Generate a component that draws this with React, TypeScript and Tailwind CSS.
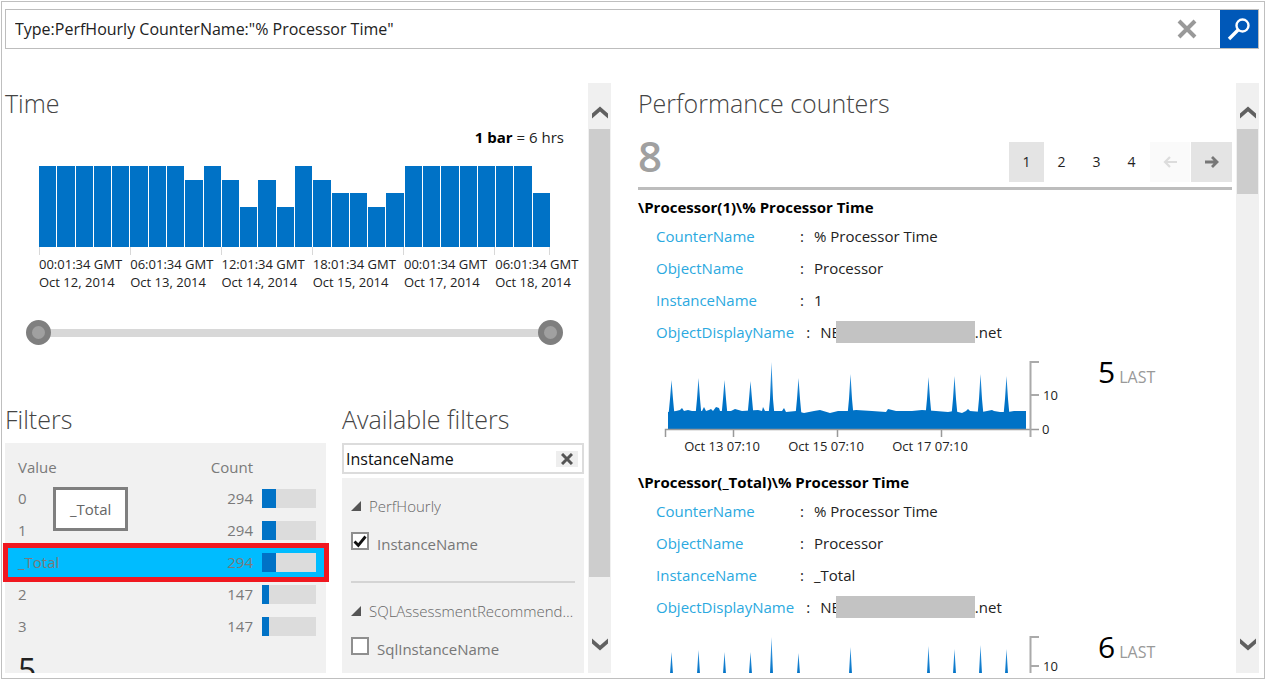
import React, { useState } from "react";

const BAR_UNITS = [
  6, 6, 6, 6, 6, 6, 6, 6, 5, 6, 5, 3, 5, 3, 6, 5, 4, 4, 3, 4, 6, 6, 6, 6, 6, 6, 6, 4,
];

const TIME_LABELS = [
  ["00:01:34 GMT", "Oct 12, 2014"],
  ["06:01:34 GMT", "Oct 13, 2014"],
  ["12:01:34 GMT", "Oct 14, 2014"],
  ["18:01:34 GMT", "Oct 15, 2014"],
  ["00:01:34 GMT", "Oct 17, 2014"],
  ["06:01:34 GMT", "Oct 18, 2014"],
];

const FILTER_ROWS = [
  { value: "0", count: 294 },
  { value: "1", count: 294 },
  { value: "_Total", count: 294 },
  { value: "2", count: 147 },
  { value: "3", count: 147 },
];

const SPIKE_X = [15, 42, 68, 94, 115, 142, 194, 272, 298, 324, 350];

const COUNTERS = [
  {
    title: "\\Processor(1)\\% Processor Time",
    instance: "1",
    last: "5",
    tick: 46,
    tops: [31, 29, 31, 32, 13, 29, 25, 28, 27, 25, 27],
  },
  {
    title: "\\Processor(_Total)\\% Processor Time",
    instance: "_Total",
    last: "6",
    tick: 42,
    tops: [28, 26, 28, 28, 13, 29, 23, 22, 25, 21, 25],
  },
];

function Chevron({ down = false }: { down?: boolean }) {
  return (
    <svg width="16" height="13" viewBox="0 0 16 13" aria-hidden="true">
      <path
        d={down ? "M0 0.5L8 7.5L16 0.5V5.5L8 12.5L0 5.5Z" : "M0 12.5L8 5.5L16 12.5V7.5L8 0.5L0 7.5Z"}
        fill="#606060"
      />
    </svg>
  );
}

function Scrollbar({ size }: { size: string }) {
  return (
    <div className="flex w-[23px] shrink-0 flex-col bg-[#f0f0f0] px-px">
      <button type="button" aria-label="Scroll up" className="flex h-[46px] shrink-0 items-center justify-center pt-3">
        <Chevron />
      </button>
      <div className="min-h-0 flex-1">
        <div className={"bg-[#cdcdcd] " + size} />
      </div>
      <button type="button" aria-label="Scroll down" className="flex h-[46px] shrink-0 items-center justify-center pb-3">
        <Chevron down />
      </button>
    </div>
  );
}

function SearchBar() {
  const [query, setQuery] = useState('Type:PerfHourly CounterName:"% Processor Time"');
  return (
    <form
      className="ml-[3px] flex h-10 shrink-0 border border-[#bdbdbd] bg-white"
      onSubmit={(e) => e.preventDefault()}
    >
      <input
        aria-label="Search query"
        value={query}
        onChange={(e) => setQuery(e.target.value)}
        className="min-w-0 flex-1 pl-[9px] text-base text-[#222] outline-none"
      />
      <button type="button" aria-label="Clear search" onClick={() => setQuery("")} className="flex w-[66px] items-center justify-center">
        <svg width="20" height="20" viewBox="0 0 20 20" aria-hidden="true">
          <path d="M2 2L18 18M18 2L2 18" stroke="#999" strokeWidth="4" />
        </svg>
      </button>
      <button type="submit" aria-label="Search" className="flex w-[38px] items-center justify-center bg-[#0058b8]">
        <svg width="24" height="24" viewBox="0 0 24 24" fill="none" stroke="#fff" aria-hidden="true">
          <circle cx="15.5" cy="8.5" r="6" strokeWidth="2.4" />
          <path d="M11 13L2 22" strokeWidth="3.4" />
        </svg>
      </button>
    </form>
  );
}

const THUMB =
  "pointer-events-none absolute inset-0 h-[25px] w-full appearance-none bg-transparent [&::-webkit-slider-thumb]:pointer-events-auto [&::-webkit-slider-thumb]:size-[25px] [&::-webkit-slider-thumb]:appearance-none [&::-webkit-slider-thumb]:rounded-full [&::-webkit-slider-thumb]:border-[6px] [&::-webkit-slider-thumb]:border-[#7f7f7f] [&::-webkit-slider-thumb]:bg-[#a0a0a0]";

function TimeSection() {
  return (
    <section>
      <h2 className="text-[25px] leading-10 font-light text-[#444]">Time</h2>
      <p className="mt-0.5 mr-6 text-right text-[15px] leading-6 text-[#222]">
        <b className="font-bold text-black">1 bar</b> = 6 hrs
      </p>
      <div className="mt-[17px] mr-[38px] ml-[34px]">
        <div className="grid h-[81px] grid-cols-28 items-end gap-px">
          {BAR_UNITS.map((u, i) => (
            <div key={i} className="bg-[#0072c6]" style={{ height: `${(u / 6) * 100}%` }} />
          ))}
        </div>
        <div className="grid grid-cols-28 border-r border-[#d8d8d8]">
          {TIME_LABELS.map((_, i) => (
            <div key={i} className="col-span-5 h-2 border-l border-[#d8d8d8] last:col-span-3" />
          ))}
        </div>
        <div className="grid grid-cols-28">
          {TIME_LABELS.map(([time, date]) => (
            <div key={date} className="col-span-5 text-[13px] leading-[18px] whitespace-nowrap text-[#222] last:col-span-3">
              {time}
              <br />
              {date}
            </div>
          ))}
        </div>
      </div>
      <div className="relative mt-[29px] mr-[25px] ml-[21px] flex h-[25px] items-center">
        <div className="mx-3 h-2 flex-1 bg-[#d8d8d8]" />
        <input type="range" aria-label="Range start" min={0} max={28} defaultValue={0} className={THUMB} />
        <input type="range" aria-label="Range end" min={0} max={28} defaultValue={28} className={THUMB} />
      </div>
    </section>
  );
}

function Filters() {
  return (
    <section className="flex min-h-0 flex-col">
      <h2 className="text-[25px] leading-10 font-light text-[#444]">Filters</h2>
      <div className="relative mt-1 flex-1 bg-[#f1f1f1] pt-[9px]">
        <table className="w-full table-fixed text-[15px] text-[#7a7a7a]">
          <thead>
            <tr className="h-[30px]">
              <th className="pl-[13px] text-left font-normal">Value</th>
              <th className="w-20 text-right font-normal">Count</th>
              <th className="w-[73px]" aria-label="Share" />
            </tr>
          </thead>
          <tbody>
            {FILTER_ROWS.map((row) => (
              <tr key={row.value} className={row.value === "_Total" ? "h-8 bg-[#00bcff]" : "h-8"}>
                <td className="pl-[13px]">{row.value}</td>
                <td className="text-right">{row.count}</td>
                <td className="pr-2.5 pl-[9px]">
                  <div className="h-[19px] bg-[#dcdcdc]">
                    <div className="h-full bg-[#0072c6]" style={{ width: `${(row.count / 1176) * 100}%` }} />
                  </div>
                </td>
              </tr>
            ))}
          </tbody>
        </table>
        <p className="mt-2 pl-[13px] text-[32px] leading-10 text-[#222]">5</p>
        <div className="absolute top-[100px] -right-[3px] -left-0.5 h-[39px] border-[5px] border-[#f01820]" />
        <div className="absolute top-11 left-12 border-[3px] border-[#7f7f7f] bg-white px-3.5 py-2 text-[15px] leading-[22px] text-[#666]">
          _Total
        </div>
      </div>
    </section>
  );
}

function FilterGroup({ name, field, checked }: { name: string; field: string; checked?: boolean }) {
  return (
    <div>
      <button type="button" className="flex h-6 w-full items-center gap-2 text-left text-[15px] font-light text-[#666]">
        <svg width="10" height="10" viewBox="0 0 10 10" className="shrink-0" aria-hidden="true">
          <path d="M10 0V10H0Z" fill="#555" />
        </svg>
        <span className="truncate">{name}</span>
      </button>
      <label className="mt-3 flex h-7 items-start gap-2 text-[15px] leading-7 text-[#777]">
        <span className="relative mt-0.5 flex size-[18px] shrink-0">
          <input
            type="checkbox"
            defaultChecked={checked}
            className="peer size-[18px] appearance-none border-2 border-[#8f8f8f] bg-white"
          />
          <svg
            width="18"
            height="18"
            viewBox="0 0 18 18"
            className="pointer-events-none absolute inset-0 hidden peer-checked:block"
            aria-hidden="true"
          >
            <path d="M3.5 9.5L7.3 13.3L14.5 4.5" fill="none" stroke="#111" strokeWidth="2.8" />
          </svg>
        </span>
        {field}
      </label>
    </div>
  );
}

function AvailableFilters() {
  const [text, setText] = useState("InstanceName");
  return (
    <section className="flex min-h-0 min-w-0 flex-col">
      <h2 className="text-[25px] leading-10 font-light whitespace-nowrap text-[#444]">Available filters</h2>
      <div className="mt-1 flex h-[31px] shrink-0 items-center border-2 border-[#dcdcdc] bg-white pr-1">
        <input
          aria-label="Search available filters"
          value={text}
          onChange={(e) => setText(e.target.value)}
          className="min-w-0 flex-1 pl-0.5 text-base text-[#111] outline-none"
        />
        <button
          type="button"
          aria-label="Clear filter"
          onClick={() => setText("")}
          className="flex h-4 w-[22px] items-center justify-center bg-[#eee]"
        >
          <svg width="12" height="12" viewBox="0 0 12 12" aria-hidden="true">
            <path d="M1 1L11 11M11 1L1 11" stroke="#555" strokeWidth="3" />
          </svg>
        </button>
      </div>
      <div className="mt-1 flex-1 bg-[#f1f1f1] px-[9px] pt-4">
        <FilterGroup name="PerfHourly" field="InstanceName" checked />
        <hr className="mt-[23px] mb-4 border-t-2 border-[#d4d4d4]" />
        <FilterGroup name="SQLAssessmentRecommendation" field="SqlInstanceName" />
      </div>
    </section>
  );
}

const AREA_TOP =
  "M12 80V63L20 62L24 61L26 59L28 62L32 61L36 62H46L48 58L50 62L53 61L55 60L57 62L60 58L63 59L64 62H75L79 60L86 62L102 61L106 62L107 58L109 62H126L128 59L130 63L140 62L148 64L158 62L164 61L174 64L182 62L192 62L200 61L216 62L230 63L232 60L240 62H256L266 61L280 62L292 63L298 62L306 64L310 62L312 60L314 62L326 63L336 61L338 62L344 63L352 63L358 62H370V80Z";

function CounterChart({ tops, tick, id }: { tops: number[]; tick: number; id: string }) {
  return (
    <svg width="410" height="117" viewBox="0 -1 410 117" className="shrink-0" role="img" aria-label="Processor time history">
      <defs>
        <linearGradient id={id} x1="0" y1="10" x2="0" y2="60" gradientUnits="userSpaceOnUse">
          <stop offset="0" stopColor="#4da3e8" />
          <stop offset="0.8" stopColor="#0072c6" />
        </linearGradient>
      </defs>
      {SPIKE_X.map((x, i) => (
        <path key={x} d={`M${x + 0.5} ${tops[i]}L${x + 2} 50L${x + 3.3} 64H${x - 2.3}L${x - 1} 50Z`} fill={`url(#${id})`} />
      ))}
      <path d={AREA_TOP} fill="#0072c6" />
      <g stroke="#999" strokeWidth="1.5" fill="none">
        <path d="M9.5 88V80.5H383M77.5 80V88M181.5 80V88M285.5 80V88" />
        <path d={`M383 13H374.5V88M374 ${tick}H383`} strokeWidth="2" stroke="#aaa" />
      </g>
      <g fontSize="13" fill="#222">
        <text x="66" y="102" textAnchor="middle">Oct 13 07:10</text>
        <text x="170" y="102" textAnchor="middle">Oct 15 07:10</text>
        <text x="274" y="102" textAnchor="middle">Oct 17 07:10</text>
        <text x="387" y={tick + 5}>10</text>
        <text x="386" y="85">0</text>
      </g>
    </svg>
  );
}

function Field({ name, children }: { name: string; children: React.ReactNode }) {
  return (
    <div className="flex h-8 items-center text-[15px] text-[#222]">
      <dt className="min-w-[136px] pr-1 text-[#2ba9e0]">{name}</dt>
      <dd className="flex items-center whitespace-nowrap">
        <span className="w-[22px] pl-2">:</span>
        {children}
      </dd>
    </div>
  );
}

function Counter({ title, instance, last, tick, tops }: (typeof COUNTERS)[number]) {
  return (
    <article className="pt-1">
      <h3 className="text-[15px] leading-[26px] font-bold text-black">{title}</h3>
      <div className="pl-[18px]">
        <dl>
          <Field name="CounterName">% Processor Time</Field>
          <Field name="ObjectName">Processor</Field>
          <Field name="InstanceName">{instance}</Field>
          <Field name="ObjectDisplayName">
            NE
            <span className="z-10 -ml-1 h-[22px] w-[139px] bg-[#c3c3c3]" />
            .net
          </Field>
        </dl>
        <div className="flex">
          <CounterChart tops={tops} tick={tick} id={`spike-${last}`} />
          <p className="flex h-12 items-baseline gap-1 pl-8 text-base text-[#999]">
            <span className="text-[30px] leading-[48px] text-black">{last}</span>
            LAST
          </p>
        </div>
      </div>
    </article>
  );
}

function Pager() {
  return (
    <nav aria-label="Pages" className="flex h-10 text-sm text-[#222]">
      <button type="button" aria-current="page" className="w-[35px] bg-[#e4e4e4]">1</button>
      <button type="button" className="w-[35px]">2</button>
      <button type="button" className="w-[35px]">3</button>
      <button type="button" className="w-[35px]">4</button>
      <button type="button" disabled aria-label="Previous page" className="ml-px flex w-10 items-center justify-center bg-[#fafafa]">
        <svg width="14" height="12" viewBox="0 0 14 12" fill="none" stroke="#dcdcdc" strokeWidth="2.2" aria-hidden="true">
          <path d="M14 6H2M7 1L2 6L7 11" />
        </svg>
      </button>
      <button type="button" aria-label="Next page" className="ml-px flex w-[41px] items-center justify-center bg-[#e4e4e4]">
        <svg width="14" height="12" viewBox="0 0 14 12" fill="none" stroke="#777" strokeWidth="2.8" aria-hidden="true">
          <path d="M0 6H12M7 1L12 6L7 11" />
        </svg>
      </button>
    </nav>
  );
}

export default function App() {
  return (
    <div className="h-screen overflow-hidden bg-white p-px font-['Open_Sans','Noto_Sans',sans-serif]">
      <div className="flex h-full flex-col border border-[#bfbfbf] pt-[7px] pr-[5px] pb-[5px]">
        <SearchBar />
        <main className="mt-[34px] grid min-h-0 flex-1 grid-cols-[606fr_621fr] grid-rows-[minmax(0,1fr)] gap-[27px] overflow-hidden pl-[3px]">
          <div className="flex min-w-0">
            <div className="flex min-w-0 flex-1 flex-col">
              <TimeSection />
              <div className="mt-[54px] grid min-h-0 flex-1 grid-cols-[321fr_242fr] gap-4 pr-1">
                <Filters />
                <AvailableFilters />
              </div>
            </div>
            <Scrollbar size="h-[90%]" />
          </div>
          <div className="flex min-w-0">
            <section className="mr-1 min-w-0 flex-1">
              <h2 className="text-[25px] leading-10 font-light text-[#444]">Performance counters</h2>
              <div className="mt-[19px] flex items-start justify-between border-b-[3px] border-[#bdbdbd] pb-[5px]">
                <p className="text-[42px] leading-7 font-semibold text-[#a0a0a0]">8</p>
                <Pager />
              </div>
              {COUNTERS.map((c) => (
                <Counter key={c.title} {...c} />
              ))}
            </section>
            <Scrollbar size="h-[13%]" />
          </div>
        </main>
      </div>
    </div>
  );
}
